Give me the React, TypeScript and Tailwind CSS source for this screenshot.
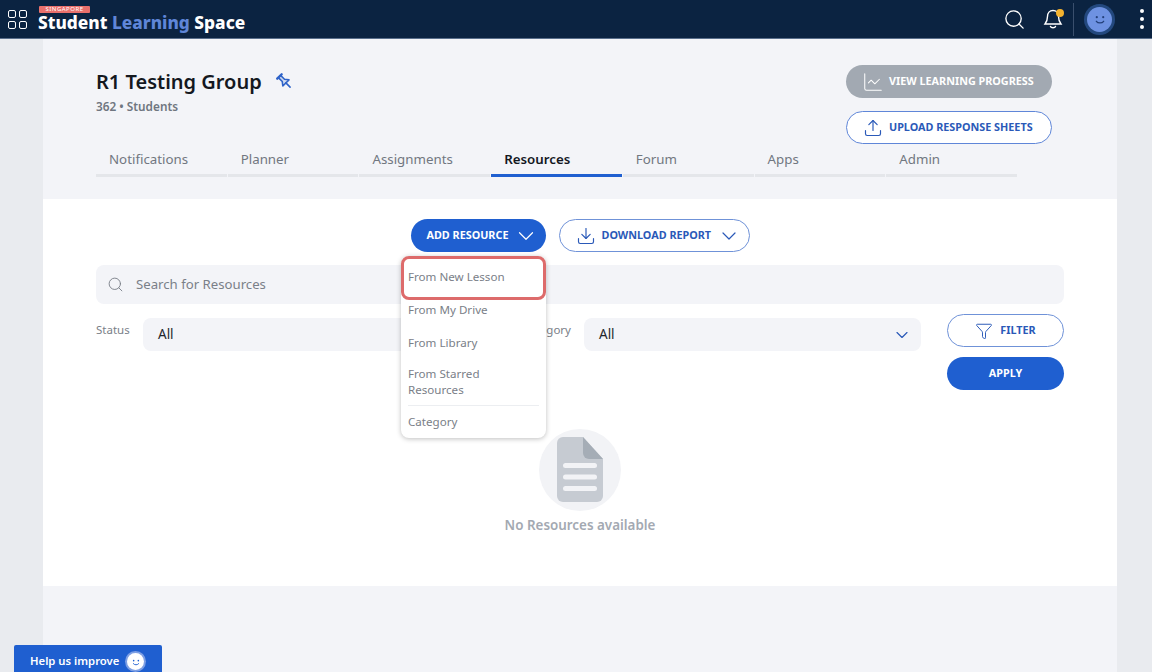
import { ChevronDown, Download, Filter, LineChart, Search, Upload } from "lucide-react";

const tabs = ["Notifications", "Planner", "Assignments", "Resources", "Forum", "Apps", "Admin"];
const menu = ["From My Drive", "From Library"];

function DocIcon() {
  return (
    <svg width="82" height="82" viewBox="0 0 82 82">
      <circle cx="41" cy="41" r="41" fill="#f2f3f6" />
      <path d="M24 8h20l20 22v37a6 6 0 0 1-6 6H24a6 6 0 0 1-6-6V14a6 6 0 0 1 6-6z" fill="#c6cbd2" />
      <path d="M44 8l20 22H50a6 6 0 0 1-6-6z" fill="#a5adb6" />
      <rect x="24" y="34" width="34" height="5" rx="2.5" fill="#f2f3f6" />
      <rect x="24" y="45.5" width="34" height="5" rx="2.5" fill="#f2f3f6" />
      <rect x="24" y="57" width="34" height="5" rx="2.5" fill="#f2f3f6" />
    </svg>
  );
}

function PinIcon() {
  return (
    <svg width="19" height="19" viewBox="0 0 24 24" fill="none" stroke="#2f63c9" strokeWidth="2" strokeLinecap="round" strokeLinejoin="round" className="rotate-[-45deg]">
      <path d="M8 3h8" strokeWidth="3" />
      <path d="M10 3v7l-3.5 4.5h11L14 10V3" fill="#2f63c9" fillOpacity="0.18" />
      <path d="M12 14.5V22" />
    </svg>
  );
}

function Smile({ size, eye }: { size: number; eye: string }) {
  return (
    <svg width={size} height={size} viewBox="0 0 24 24">
      <circle cx="8.5" cy="10" r="1.2" fill={eye} />
      <circle cx="15.5" cy="10" r="1.2" fill={eye} />
      <path d="M8 14.5c1.8 2.4 6.2 2.4 8 0" fill="none" stroke={eye} strokeWidth="1.4" strokeLinecap="round" />
    </svg>
  );
}

export default function App() {
  return (
    <div className="relative h-[672px] overflow-hidden bg-[#e9ebef] font-['Noto_Sans',sans-serif]">
      {/* HEADER */}
      <header className="flex h-[39px] items-center justify-between border-b border-[#5a6f8c] bg-[#0b2341] pl-[8px] pr-[8px]">
        <div className="flex items-center gap-[11px]">
          <div className="grid grid-cols-2 gap-[3px]">
            <span className="h-[8px] w-[8px] rounded-[2px] border-[1.5px] border-white" />
            <span className="h-[8px] w-[8px] rounded-[2px] border-[1.5px] border-white" />
            <span className="h-[8px] w-[8px] rounded-[2px] border-[1.5px] border-white" />
            <span className="h-[8px] w-[8px] rounded-[2px] border-[1.5px] border-white" />
          </div>
          <div className="relative pt-[7px]">
            <span className="absolute left-[1px] top-[-2px] flex h-[7px] w-[51px] items-center justify-center rounded-[1px] bg-[#e9706c] text-[6px] leading-none tracking-[0.5px] text-white">
              SINGAPORE
            </span>
            <div className="text-[17.3px] font-extrabold leading-[16px] text-white">
              Student <span className="text-[#5f86d8]">Learning</span> Space
            </div>
          </div>
        </div>
        <div className="flex items-center">
          <Search size={23} strokeWidth={1.4} className="mr-[17px] text-white" />
          <div className="relative mr-[10px]">
            <svg width="20" height="22" viewBox="0 0 20 22" fill="none" stroke="white" strokeWidth="1.4">
              <path d="M10 2.5c-3.4 0-5.5 2.6-5.5 6 0 4-1 5.5-2.5 7.5h16c-1.5-2-2.5-3.5-2.5-7.5 0-3.4-2.1-6-5.5-6z" />
              <path d="M7.5 18.5c.6 1.6 4.4 1.6 5 0" strokeLinecap="round" />
            </svg>
            <span className="absolute right-[-1px] top-[1px] h-[8px] w-[8px] rounded-full bg-[#f5b32f]" />
          </div>
          <span className="mr-[10px] h-[33px] w-px bg-[#3a4f6d]" />
          <div className="mr-[25px] flex h-[31px] w-[31px] items-center justify-center rounded-full bg-[#23487e]">
            <div className="flex h-[25px] w-[25px] items-center justify-center rounded-full bg-[#6e92e2]">
              <Smile size={22} eye="#23407a" />
            </div>
          </div>
          <div className="flex flex-col gap-[4px]">
            <span className="h-[4px] w-[4px] rounded-full bg-white" />
            <span className="h-[4px] w-[4px] rounded-full bg-white" />
            <span className="h-[4px] w-[4px] rounded-full bg-white" />
          </div>
        </div>
      </header>

      <main className="mx-[43px] h-[633px] w-[1074px] bg-[#f3f4f8]">
        {/* GROUP HEADER */}
        <section className="h-[160px] px-[53px] pt-[26px]">
          <div className="flex h-[87px] justify-between pr-[12px]">
            <div>
              <div className="flex items-center gap-[13px]">
                <h1 className="text-[20px] font-semibold leading-[33px] text-[#14181f]">R1 Testing Group</h1>
                <PinIcon />
              </div>
              <p className="text-[11.8px] font-semibold leading-[16px] text-[#6f7680]">362 • Students</p>
            </div>
            <div className="flex flex-col gap-[13px]">
              <button className="flex h-[33px] w-[206px] items-center gap-[5px] rounded-full bg-[#a2a9b2] pl-[16px] text-[10.8px] font-bold text-white">
                <LineChart size={22} strokeWidth={1.1} />
                VIEW LEARNING PROGRESS
              </button>
              <button className="flex h-[33px] w-[206px] items-center gap-[6px] rounded-full border border-[#5f86d8] bg-white pl-[16px] text-[10.8px] font-bold text-[#2a59b8]">
                <Upload size={20} strokeWidth={1.4} />
                UPLOAD RESPONSE SHEETS
              </button>
            </div>
          </div>
          <nav className="grid w-[921px] grid-cols-7 gap-x-px">
            {tabs.map((tab) => (
              <div
                key={tab}
                className={
                  tab === "Resources"
                    ? "h-[25px] border-b-[3px] border-[#1f5fd0] pl-[13px] text-[13.3px] font-semibold leading-[14px] text-[#14181f]"
                    : "h-[25px] border-b-[3px] border-[#e4e6ea] pl-[13px] text-[13.3px] leading-[14px] text-[#717780]"
                }
              >
                {tab}
              </div>
            ))}
          </nav>
        </section>

        {/* RESOURCES */}
        <section className="relative h-[387px] bg-white px-[53px] pt-[20px]">
          <div className="flex justify-center gap-[13px]">
            <button className="flex h-[33px] w-[135px] items-center gap-[5px] rounded-full bg-[#1f5fd0] pl-[16px] text-[10.8px] font-bold text-white">
              ADD RESOURCE
              <ChevronDown size={26} strokeWidth={1.1} />
            </button>
            <button className="flex h-[33px] w-[191px] items-center gap-[6px] rounded-full border border-[#6f92d8] bg-white pl-[16px] text-[10.8px] font-bold text-[#2a59b8]">
              <Download size={20} strokeWidth={1.4} />
              DOWNLOAD REPORT
              <ChevronDown size={24} strokeWidth={1.2} />
            </button>
          </div>

          <div className="mt-[13px] flex h-[39px] items-center gap-[12px] rounded-[8px] bg-[#f3f4f8] px-[11px] text-[13.2px] text-[#7a8088]">
            <Search size={17} strokeWidth={1.3} />
            <span className="pt-[1px]">Search for Resources</span>
          </div>

          <div className="mt-[14px] flex items-start">
            <span className="mr-[13px] mt-[4px] w-[34px] shrink-0 text-[11.5px] leading-[16px] text-[#7a8088]">Status</span>
            <div className="flex h-[33px] w-[388px] shrink-0 items-center rounded-[8px] bg-[#f3f4f8] pl-[15px] text-[13.5px] text-[#22262c]">All</div>
            <span className="ml-[-10px] mr-[13px] mt-[4px] w-[50px] shrink-0 text-right text-[11.5px] leading-[16px] text-[#7a8088]">Category</span>
            <div className="flex h-[33px] w-[337px] shrink-0 items-center justify-between rounded-[8px] bg-[#f3f4f8] pl-[15px] pr-[9px] text-[13.5px] text-[#22262c]">
              All
              <ChevronDown size={20} strokeWidth={1.4} className="text-[#2a59b8]" />
            </div>
            <div className="ml-[26px] mt-[-4px] flex flex-col gap-[10px]">
              <button className="flex h-[33px] w-[117px] items-center justify-center gap-[7px] rounded-full border border-[#6f92d8] bg-white text-[10.8px] font-bold text-[#2a59b8]">
                <Filter size={18} strokeWidth={1.3} />
                FILTER
              </button>
              <button className="h-[33px] w-[117px] rounded-full bg-[#1f5fd0] text-[10.8px] font-bold text-white">APPLY</button>
            </div>
          </div>

          {/* EMPTY STATE */}
          <div className="mt-[39px] flex flex-col items-center">
            <DocIcon />
            <p className="mt-[5px] text-[13.4px] font-semibold leading-[18px] text-[#a3a9b2]">No Resources available</p>
          </div>

          {/* DROPDOWN */}
          <div className="absolute left-[358px] top-[57px] z-10 w-[145px] rounded-[8px] bg-white pb-[8px] text-[11.6px] text-[#7a8088] shadow-[0_1px_5px_rgba(0,0,0,0.25)]">
            <div className="h-[44px] rounded-[8px] border-[3px] border-[#dd6b6b] pl-[4px] pt-[10px] leading-[16px]">From New Lesson</div>
            {menu.map((item) => (
              <div key={item} className="h-[33px] pl-[7px] pt-[2px] leading-[16px]">{item}</div>
            ))}
            <div className="mx-[7px] border-b border-[#eceef1] pb-[7px] leading-[16px]">
              From Starred
              <br />
              Resources
            </div>
            <div className="pl-[7px] pt-[8px] leading-[16px]">Category</div>
          </div>
        </section>
      </main>

      {/* FEEDBACK TAB */}
      <button className="absolute bottom-[-6px] left-[14px] flex h-[33px] w-[148px] items-center gap-[8px] rounded-t-[2px] bg-[#1f5fd0] pl-[16px] text-[11.3px] font-semibold text-white">
        Help us improve
        <span className="flex h-[17px] w-[17px] items-center justify-center rounded-full bg-white ring-2 ring-[#7d9fe4]">
          <Smile size={16} eye="#1f5fd0" />
        </span>
      </button>
    </div>
  );
}
